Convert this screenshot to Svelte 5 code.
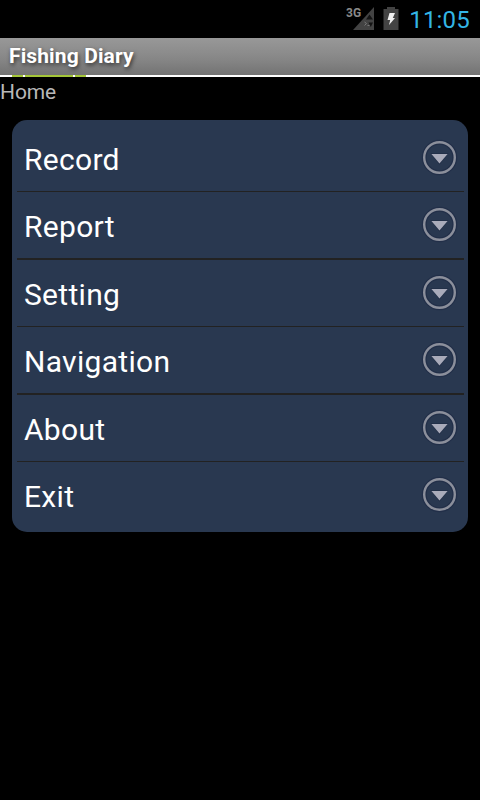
<script>
	const menu_list = ['Record', 'Report', 'Setting', 'Navigation', 'About', 'Exit'];
</script>

<div class="screen">
	<header class="status_bar">
		<svg class="signal" width="30" height="38" viewBox="0 0 30 38" aria-hidden="true">
			<path d="M28 7V30H7z" fill="#434343" />
			<path d="M20 19.5L23.5 14.5L27 19.5zM22.5 22.5H27L24.8 27z" fill="#141414" />
			<path d="M18.5 22l2 1.5-2 2M21.5 25.5h2" fill="none" stroke="#777" />
			<text x="0" y="17" class="network">3G</text>
		</svg>
		<svg class="battery" width="16" height="38" viewBox="0 0 16 38" aria-hidden="true">
			<path d="M4 7H12V9H15.5V30H.5V9H4z" fill="#434343" />
			<path d="M6.5 13H12L9.8 18H12L6 25L7.2 20H4.5z" fill="#f0f0f0" />
		</svg>
		<span class="clock">11:05</span>
	</header>

	<div class="title_bar">
		<h1 class="title">Fishing Diary</h1>
	</div>
	<div class="logo_strip">
		<span class="logo_side"></span>
		<span class="logo_middle"></span>
		<span class="logo_side"></span>
	</div>

	<p class="path">Home</p>

	<ul class="menu">
		{#each menu_list as menu_item (menu_item)}
			<li class="menu_row">
				<span class="menu_label">{menu_item}</span>
				<svg class="menu_icon" width="39" height="39" viewBox="0 0 39 39" aria-hidden="true">
					<circle cx="19.5" cy="19.5" r="15.3" fill="none" stroke="#1b2640" stroke-opacity="0.45" stroke-width="5" />
					<circle cx="19.5" cy="19.5" r="15.3" fill="none" stroke="#8b8f9b" stroke-width="2.4" />
					<path d="M10.5 15.2H28.5L19.5 26.8z" fill="#1b2640" fill-opacity="0.6" />
					<path d="M11.4 16H27.6L19.5 25.6z" fill="#a9abba" />
				</svg>
			</li>
		{/each}
	</ul>
</div>

<style>
	:global(body) {
		background: #000;
	}

	.screen {
		width: 480px;
		height: 800px;
		overflow: hidden;
		background: #000;
		color: #fff;
		font-family: Roboto, sans-serif;
	}

	.status_bar {
		display: flex;
		justify-content: flex-end;
		height: 38px;
		padding-right: 10px;
		box-sizing: border-box;
	}

	.signal {
		margin-right: 7px;
	}

	.network {
		font-size: 12px;
		font-weight: 700;
		fill: #8a8a8a;
	}

	.battery {
		margin-right: 10px;
	}

	.clock {
		font-size: 24px;
		line-height: 40px;
		letter-spacing: 0.2px;
		color: #33b5e5;
	}

	.title_bar {
		height: 37px;
		padding-left: 9px;
		background: linear-gradient(#989898, #8c8c8c 40%, #858585 60%, #737373);
	}

	.title {
		margin: 0;
		font-size: 21px;
		font-weight: 700;
		line-height: 36px;
		letter-spacing: 0.12px;
		color: #fff;
		text-shadow: 1px 2px 4px rgba(0, 0, 0, 0.65);
	}

	.logo_strip {
		display: flex;
		gap: 2px;
		height: 2px;
		padding-left: 12px;
		background: #fff;
	}

	.logo_side {
		width: 11px;
		background: #a4c639;
	}

	.logo_middle {
		width: 48px;
		background: #a4c639;
	}

	.path {
		height: 43px;
		margin: 0;
		font-size: 21px;
		line-height: 31px;
		letter-spacing: -0.1px;
		color: #b8b8b8;
	}

	.menu {
		height: 412px;
		margin: 0 12px;
		padding: 4px 4px 0 5px;
		box-sizing: border-box;
		border-radius: 15px;
		background: #293850;
		list-style: none;
	}

	.menu_row {
		display: flex;
		align-items: center;
		justify-content: space-between;
		height: 66px;
		padding: 0 5px 0 7px;
		border-bottom: 1px solid #222;
	}

	.menu_row:first-child {
		height: 67px;
	}

	.menu_row:nth-child(even) {
		border-bottom-width: 2px;
	}

	.menu_row:last-child {
		border-bottom: 0;
	}

	.menu_label {
		font-size: 30px;
		line-height: 36px;
		letter-spacing: 0.3px;
		padding-top: 4px;
	}

	.menu_row:not(:first-child) .menu_icon {
		margin-bottom: 1px;
	}
</style>
